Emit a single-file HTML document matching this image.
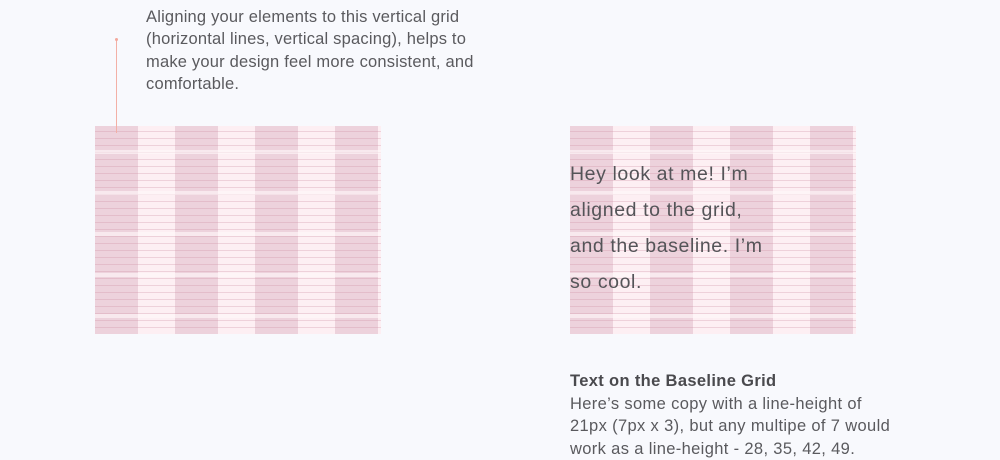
<!DOCTYPE html>
<html><head><meta charset="utf-8"><style>
html,body{margin:0;padding:0;}
body{width:1000px;height:460px;background:#f8f9fd;position:relative;overflow:hidden;font-family:"Liberation Sans",sans-serif;color:#5a5a5e;}
.grid{position:absolute;top:126px;width:286px;height:208px;background:#fdeff3;overflow:hidden;}
.col{position:absolute;top:0;width:43px;height:208px;background:rgba(205,150,170,0.32);}
.lines{position:absolute;left:0;top:0;width:100%;height:100%;background:repeating-linear-gradient(to bottom,transparent 0,transparent 5px,rgba(205,140,160,0.3) 5px,rgba(205,140,160,0.3) 6px,transparent 6px,transparent 7px);}
.gap{position:absolute;left:0;width:100%;height:4px;background:rgba(255,248,250,0.6);}
.note{position:absolute;left:146px;top:6px;font-size:16.5px;line-height:22.3px;width:400px;letter-spacing:0.2px;}
.big{position:absolute;left:570px;top:156px;font-size:19.5px;line-height:36px;color:#545458;letter-spacing:0.6px;}
.cap{position:absolute;left:570px;top:370px;font-size:16.5px;line-height:22.5px;width:430px;letter-spacing:0.35px;}
</style></head><body>
<div class="note">Aligning your elements to this vertical grid<br>(horizontal lines, vertical spacing), helps to<br>make your design feel more consistent, and<br>comfortable.</div>

<div class="grid" style="left:95px">
<div class="col" style="left:0"></div><div class="col" style="left:80px"></div><div class="col" style="left:160px"></div><div class="col" style="left:240px"></div>
<div class="lines"></div>
<div class="gap" style="top:24px"></div><div class="gap" style="top:65px"></div><div class="gap" style="top:106px"></div><div class="gap" style="top:147px"></div><div class="gap" style="top:188px"></div>
</div>
<div style="position:absolute;left:116px;top:40px;width:1px;height:93px;background:#f3b0a6"></div>
<div style="position:absolute;left:115px;top:38px;width:3px;height:3px;border-radius:50%;background:#f3a89c"></div>

<div class="grid" style="left:570px">
<div class="col" style="left:0"></div><div class="col" style="left:80px"></div><div class="col" style="left:160px"></div><div class="col" style="left:240px"></div>
<div class="lines"></div>
<div class="gap" style="top:24px"></div><div class="gap" style="top:65px"></div><div class="gap" style="top:106px"></div><div class="gap" style="top:147px"></div><div class="gap" style="top:188px"></div>
</div>
<div class="big">Hey look at me! I’m<br>aligned to the grid,<br>and the baseline. I’m<br>so cool.</div>

<div class="cap"><b style="color:#4a4a4e">Text on the Baseline Grid</b><br>Here’s some copy with a line-height of<br>21px (7px x 3), but any multipe of 7 would<br>work as a line-height - 28, 35, 42, 49.</div>
</body></html>
